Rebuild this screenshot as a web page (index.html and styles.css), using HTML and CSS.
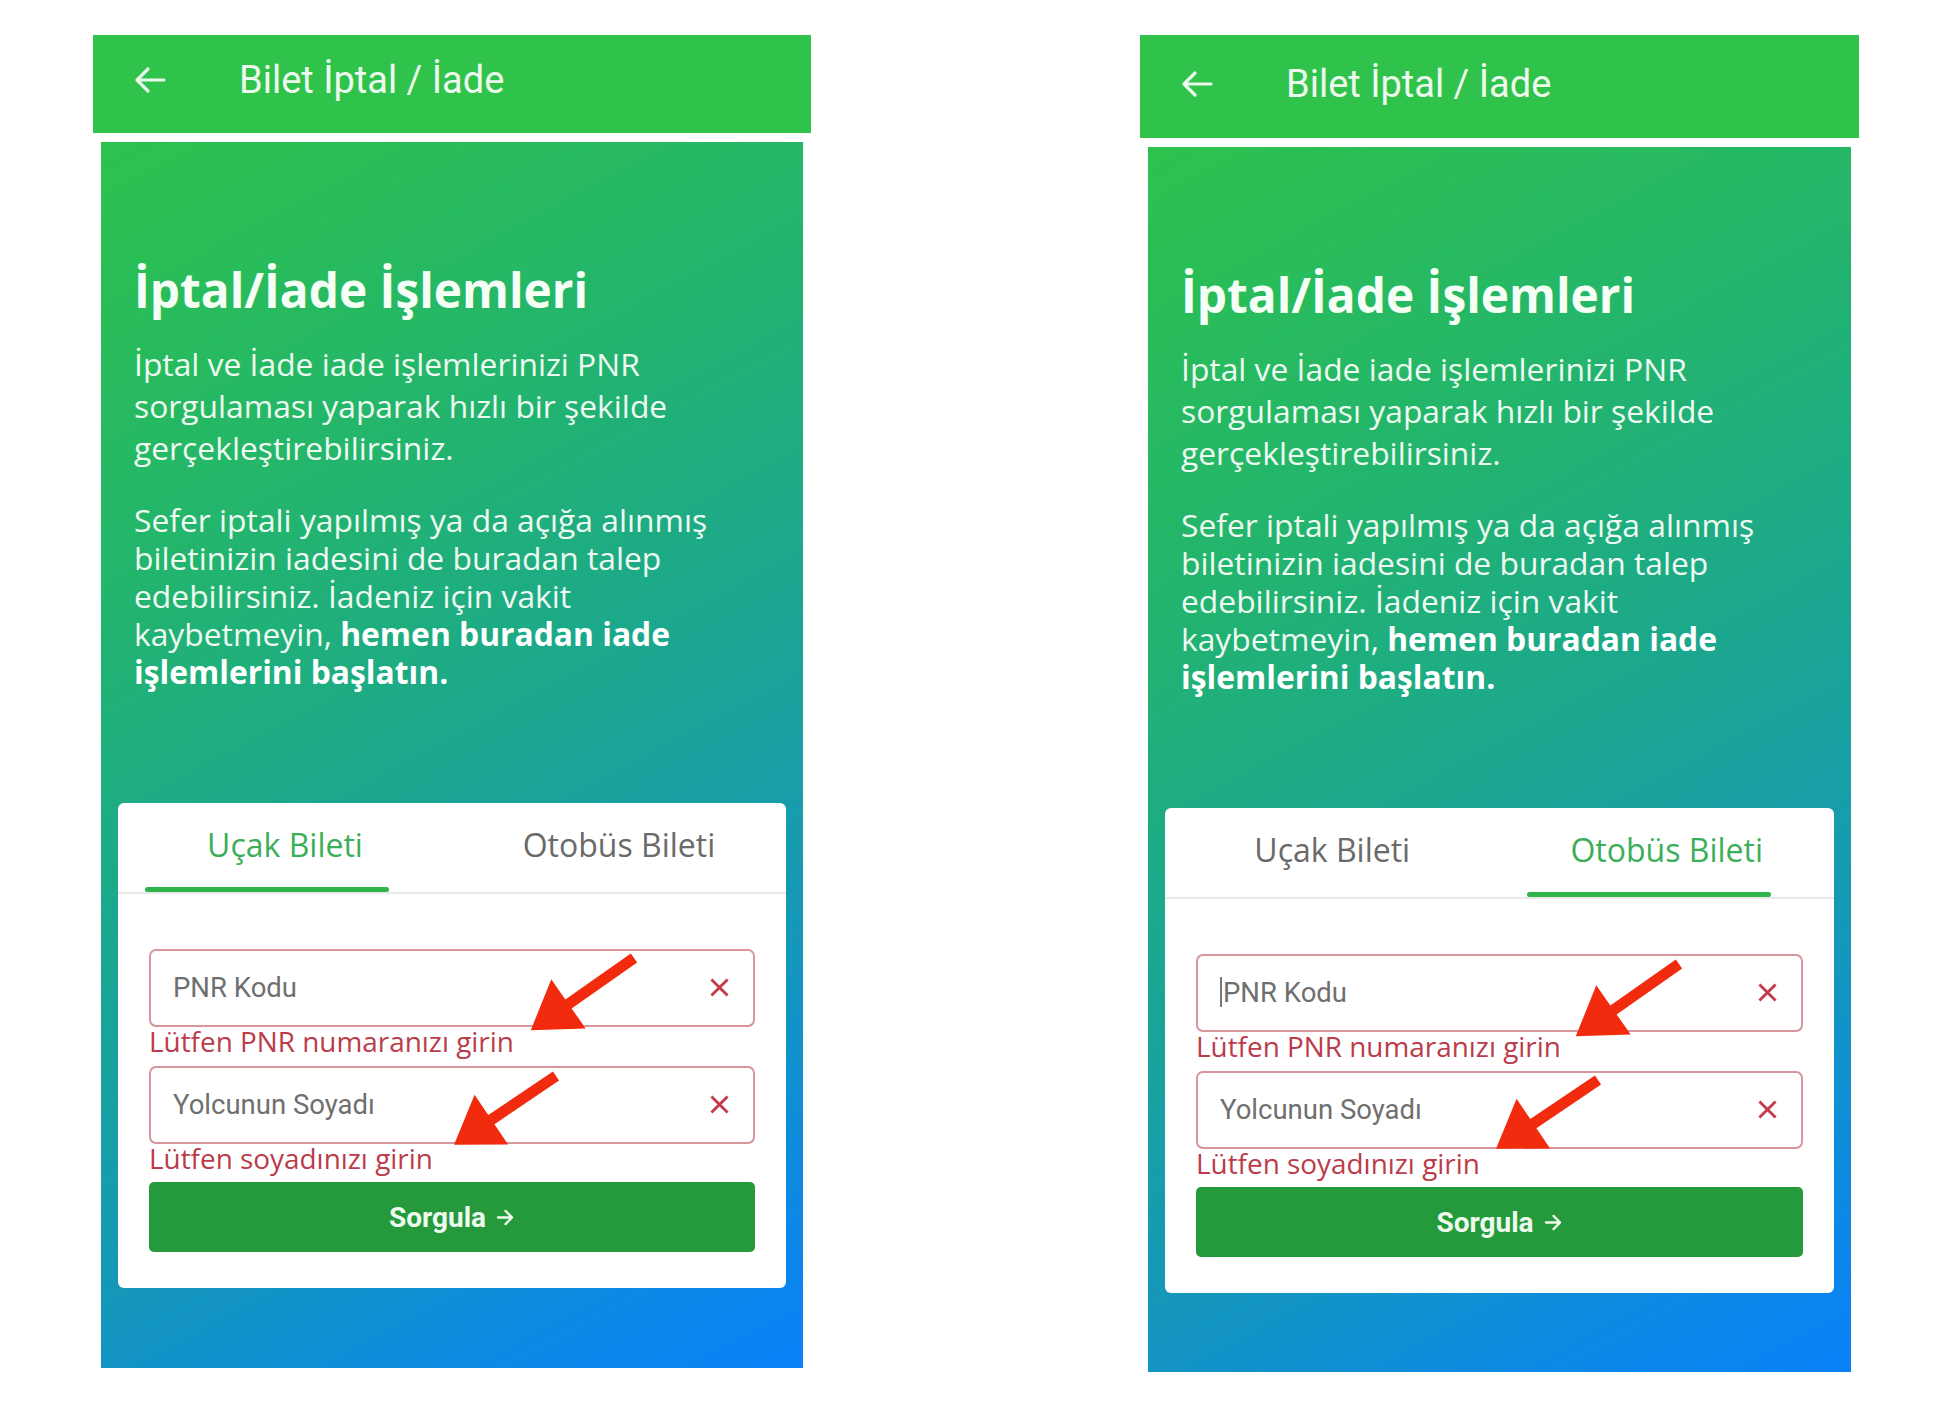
FILE: index.html
```html
<!DOCTYPE html>
<html lang="tr">
<head>
<meta charset="utf-8">
<title>Bilet İptal / İade</title>
<link rel="stylesheet" href="styles.css">
</head>
<body>
<main class="stage">

  <section class="phone">
    <header class="appbar">
      <svg class="back" viewBox="0 0 32 28" aria-hidden="true"><path d="M30 14H3M14 3L3 14L14 25"/></svg>
      <span class="appbar-title">Bilet İptal / İade</span>
    </header>
    <div class="sheet">
      <div class="intro">
        <h1>İptal/İade İşlemleri</h1>
        <p class="lead">İptal ve İade iade işlemlerinizi PNR sorgulaması yaparak hızlı bir şekilde gerçekleştirebilirsiniz.</p>
        <p class="lead more">Sefer iptali yapılmış ya da açığa alınmış biletinizin iadesini de buradan talep edebilirsiniz. İadeniz için vakit kaybetmeyin, <strong>hemen buradan iade işlemlerini başlatın.</strong></p>
      </div>
      <div class="card">
        <div class="tabs">
          <div class="tab is-active"><span class="tab-label">Uçak Bileti</span><span class="indicator"></span></div>
          <div class="tab"><span class="tab-label">Otobüs Bileti</span><span class="indicator"></span></div>
        </div>
        <form class="form">
          <div class="field"><input type="text" placeholder="PNR Kodu"><svg class="clear" viewBox="0 0 20 20" aria-hidden="true"><path d="M3 3L17 17M17 3L3 17"/></svg></div>
          <p class="error">Lütfen PNR numaranızı girin</p>
          <div class="field field-next"><input type="text" placeholder="Yolcunun Soyadı"><svg class="clear" viewBox="0 0 20 20" aria-hidden="true"><path d="M3 3L17 17M17 3L3 17"/></svg></div>
          <p class="error">Lütfen soyadınızı girin</p>
          <button type="button" class="submit">Sorgula <svg class="go" viewBox="0 0 20 18" aria-hidden="true"><path d="M2 9H17M10 2L17 9L10 16"/></svg></button>
        </form>
        <svg class="marks" viewBox="0 0 668 485" aria-hidden="true">
          <polygon transform="translate(516 155) rotate(145)" points="0,-5.5 80,-5.5 80,-30 126,0 80,30 80,5.5 0,5.5"/>
          <polygon transform="translate(438 273) rotate(146)" points="0,-5.5 78,-5.5 78,-30 123,0 78,30 78,5.5 0,5.5"/>
        </svg>
      </div>
    </div>
  </section>

  <section class="phone phone-b">
    <header class="appbar">
      <svg class="back" viewBox="0 0 32 28" aria-hidden="true"><path d="M30 14H3M14 3L3 14L14 25"/></svg>
      <span class="appbar-title">Bilet İptal / İade</span>
    </header>
    <div class="sheet">
      <div class="intro">
        <h1>İptal/İade İşlemleri</h1>
        <p class="lead">İptal ve İade iade işlemlerinizi PNR sorgulaması yaparak hızlı bir şekilde gerçekleştirebilirsiniz.</p>
        <p class="lead more">Sefer iptali yapılmış ya da açığa alınmış biletinizin iadesini de buradan talep edebilirsiniz. İadeniz için vakit kaybetmeyin, <strong>hemen buradan iade işlemlerini başlatın.</strong></p>
      </div>
      <div class="card">
        <div class="tabs">
          <div class="tab"><span class="tab-label">Uçak Bileti</span><span class="indicator"></span></div>
          <div class="tab is-active"><span class="tab-label">Otobüs Bileti</span><span class="indicator"></span></div>
        </div>
        <form class="form">
          <div class="field"><span class="caret"></span><input type="text" placeholder="PNR Kodu"><svg class="clear" viewBox="0 0 20 20" aria-hidden="true"><path d="M3 3L17 17M17 3L3 17"/></svg></div>
          <p class="error">Lütfen PNR numaranızı girin</p>
          <div class="field field-next"><input type="text" placeholder="Yolcunun Soyadı"><svg class="clear" viewBox="0 0 20 20" aria-hidden="true"><path d="M3 3L17 17M17 3L3 17"/></svg></div>
          <p class="error">Lütfen soyadınızı girin</p>
          <button type="button" class="submit">Sorgula <svg class="go" viewBox="0 0 20 18" aria-hidden="true"><path d="M2 9H17M10 2L17 9L10 16"/></svg></button>
        </form>
        <svg class="marks" viewBox="0 0 668 485" aria-hidden="true">
          <polygon transform="translate(514 156) rotate(145)" points="0,-5.5 80,-5.5 80,-30 126,0 80,30 80,5.5 0,5.5"/>
          <polygon transform="translate(433 272) rotate(146)" points="0,-5.5 78,-5.5 78,-30 123,0 78,30 78,5.5 0,5.5"/>
        </svg>
      </div>
    </div>
  </section>

</main>
</body>
</html>
```

FILE: styles.css
```css
html, body {
  margin: 0;
  padding: 0;
  background: #ffffff;
}

body {
  width: 1950px;
  height: 1412px;
  overflow: hidden;
  font-family: "Open Sans", "Noto Sans", sans-serif;
}

.stage {
  display: flex;
  align-items: flex-start;
  gap: 329px;
  padding: 35px 0 0 93px;
}

.phone {
  width: 718px;
  flex: none;
}

.phone-b {
  width: 719px;
}

/* ---------- app bar ---------- */
.appbar {
  height: 98px;
  background: #2fc34c;
  display: flex;
  align-items: center;
  gap: 73px;
  padding: 0 0 8px 41px;
  box-sizing: border-box;
}

.phone-b .appbar {
  height: 103px;
  padding-bottom: 5px;
}

.back {
  width: 32px;
  height: 28px;
  flex: none;
  fill: none;
  stroke: #e9f9ea;
  stroke-width: 3.2;
  stroke-linecap: round;
  stroke-linejoin: round;
}

.appbar-title {
  font-family: Roboto, "Liberation Sans", sans-serif;
  font-weight: 400;
  font-size: 38px;
  line-height: 1;
  color: #eef9ee;
}

/* ---------- gradient sheet ---------- */
.sheet {
  margin: 9px 8px 0;
  height: 1226px;
  box-sizing: border-box;
  padding: 120px 17px 0;
  background: linear-gradient(152deg, #2dc24d 0%, #23b56c 28%, #1ba78f 50%, #1598b8 72%, #0c88e6 90%, #0981f8 100%);
}

.phone-b .sheet {
  height: 1225px;
}

.intro {
  padding: 0 16px;
  color: #eefaf1;
}

.intro h1 {
  margin: 0;
  font-weight: 700;
  font-size: 47.8px;
  line-height: 56px;
  color: #f6fff6;
}

.lead {
  margin: 25px 0 0;
  max-width: 600px;
  font-size: 31.8px;
  line-height: 42px;
  font-weight: 400;
}

.lead.more {
  margin-top: 32px;
  line-height: 38px;
}

.lead strong {
  font-weight: 700;
  color: #ffffff;
}

/* ---------- card ---------- */
.card {
  position: relative;
  margin-top: 112px;
  background: #ffffff;
  border-radius: 6px;
  padding-bottom: 36px;
}

.tabs {
  display: grid;
  grid-template-columns: 1fr 1fr;
  border-bottom: 2px solid #e9e9e9;
}

.tab {
  height: 89px;
  display: flex;
  flex-direction: column;
  box-sizing: border-box;
  padding-top: 22px;
}

.tab-label {
  text-align: center;
  font-size: 32px;
  line-height: 40px;
  color: #6a6a6a;
}

.indicator {
  margin-top: auto;
  margin-left: 27px;
  width: 244px;
  height: 5px;
  border-radius: 3px;
  background: transparent;
}

.tab.is-active .tab-label {
  color: #3dae58;
}

.tab.is-active .indicator {
  background: #2fb34b;
}

/* ---------- form ---------- */
.form {
  padding: 55px 31px 0;
  margin: 0;
}

.field {
  height: 78px;
  box-sizing: border-box;
  border: 2px solid #d8959c;
  border-radius: 7px;
  display: flex;
  align-items: center;
  padding: 0 22px 2px 22px;
}

.field-next {
  margin-top: 11px;
}

.field input {
  flex: 1;
  min-width: 0;
  border: 0;
  outline: none;
  background: transparent;
  padding: 0;
  font-family: Roboto, "Liberation Sans", sans-serif;
  font-size: 27.5px;
  color: #333333;
}

.field input::placeholder {
  color: #6f6f6f;
  opacity: 1;
}

.caret {
  width: 2px;
  height: 30px;
  background: #7a7a7a;
  margin-right: 1px;
  flex: none;
}

.clear {
  width: 23px;
  height: 23px;
  flex: none;
  fill: none;
  stroke: #c23c4b;
  stroke-width: 2.5;
}

.error {
  margin: 0;
  font-size: 27.9px;
  line-height: 28px;
  color: #bb3b4a;
  white-space: nowrap;
}

.submit {
  margin-top: 10px;
  width: 100%;
  height: 70px;
  border: 0;
  border-radius: 5px;
  background: #249a3c;
  color: #eefaee;
  font-family: Roboto, "Liberation Sans", sans-serif;
  font-weight: 700;
  font-size: 28px;
  display: flex;
  align-items: center;
  justify-content: center;
  gap: 10px;
  padding: 0;
}

.go {
  width: 19px;
  height: 17px;
  fill: none;
  stroke: #eefaee;
  stroke-width: 2.4;
  stroke-linecap: round;
  stroke-linejoin: round;
}

/* annotation arrows drawn over the card */
.marks {
  position: absolute;
  left: 0;
  top: 0;
  width: 668px;
  height: 485px;
  pointer-events: none;
  fill: #f22a0e;
}
```
